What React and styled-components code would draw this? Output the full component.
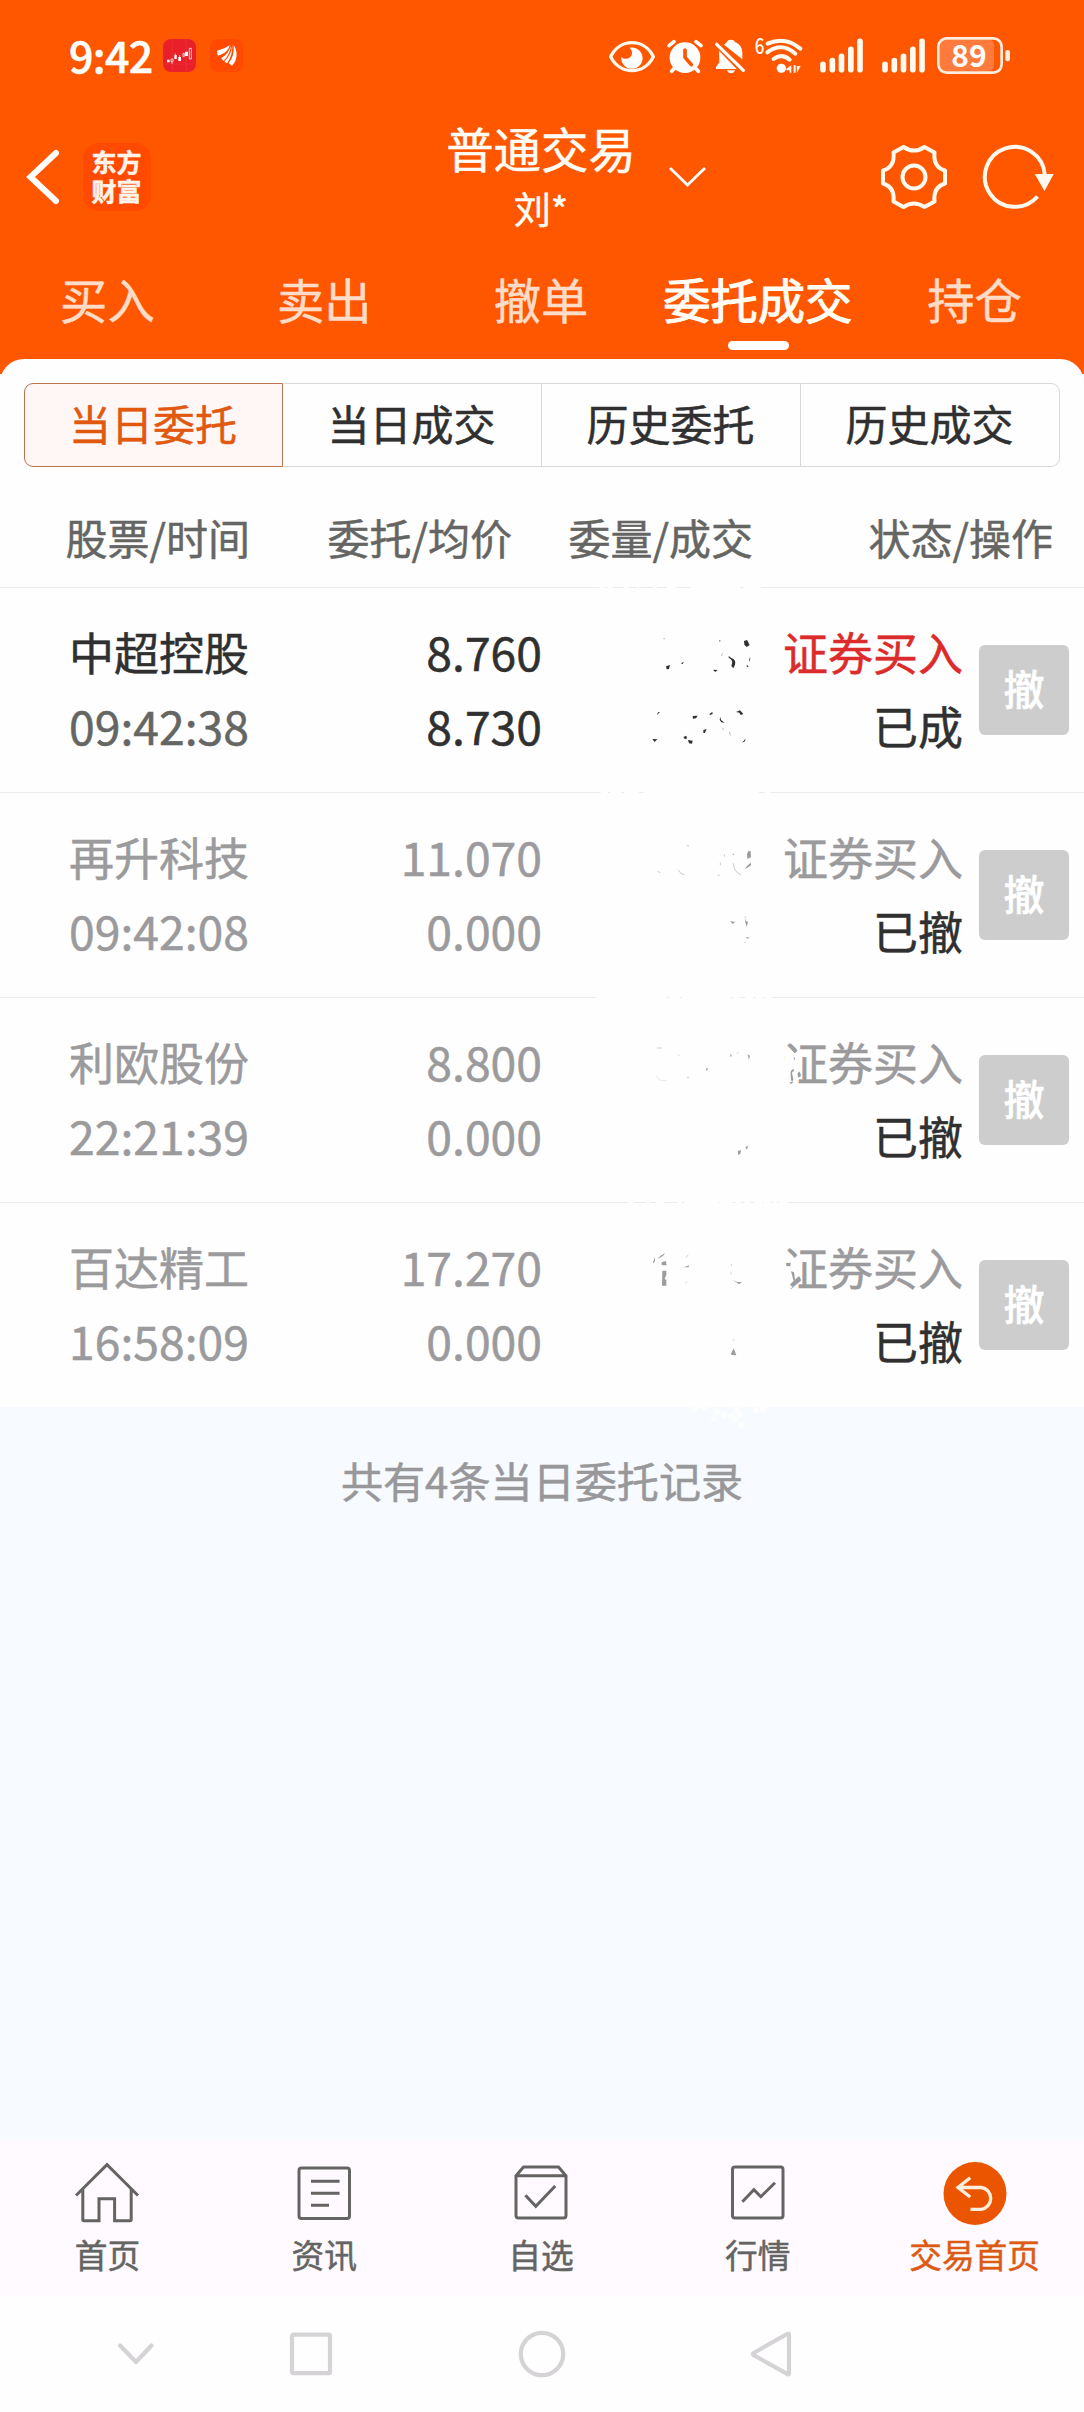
import React, { useState } from 'react';
import styled, { createGlobalStyle } from 'styled-components';

const GlobalStyle = createGlobalStyle`
  * {
    box-sizing: border-box;
  }
  body {
    margin: 0;
    background: #f7faff;
    font-family: 'Noto Sans CJK SC', 'Noto Sans', sans-serif;
    -webkit-text-stroke: 0.5px currentColor;
  }
  svg text {
    -webkit-text-stroke: 0;
  }
`;

const Page = styled.div`
  width: 1084px;
  height: 2412px;
  display: flex;
  flex-direction: column;
  background: #f7faff;
  overflow: hidden;
`;

const TopArea = styled.div`
  height: 374px;
  flex-shrink: 0;
  background: #ff5600;
  color: #fffdf6;
`;

const StatusBar = styled.div`
  height: 110px;
  padding: 0 74px 0 69px;
  display: flex;
  align-items: center;
`;

const Clock = styled.div`
  width: 94px;
  padding-bottom: 2px;
  font-size: 43px;
  font-weight: 500;
  line-height: 60px;
  letter-spacing: -0.7px;
  color: #fff;
`;

const AppBadge = styled.svg`
  width: 33px;
  height: 33px;
  margin-right: 14px;
`;

const StatusIcons = styled.div`
  display: flex;
  margin-left: auto;
`;

const StatusSvg = styled.svg`
  height: 38.67px;
  margin-left: ${(props) => props.$gap || 0}px;
  overflow: visible;
`;

const Header = styled.div`
  height: 134px;
  display: grid;
  grid-template-columns: 1fr auto 1fr;
  align-items: center;
`;

const HeaderLeft = styled.div`
  display: flex;
  align-items: center;
  padding-left: 26px;
`;

const Brand = styled.div`
  width: 68px;
  height: 68px;
  margin-left: 23px;
  padding: 4px 1px 0 0;
  border-radius: 16px;
  background: #ff4a00;
  color: #fff3ea;
  font-size: 25px;
  font-weight: 700;
  line-height: 29px;
  text-align: center;
`;

const TitleBlock = styled.div`
  padding: 2px 2px 0 0;
  text-align: center;
`;

const Title = styled.div`
  font-size: 47.4px;
  line-height: 60px;
`;

const Account = styled.div`
  font-size: 37px;
  line-height: 60px;
`;

const HeaderRight = styled.div`
  display: flex;
  align-items: center;
  padding: 0 29px 0 30px;

  svg:nth-child(2) {
    margin-left: auto;
    margin-right: 34px;
  }
`;

const Tabs = styled.div`
  display: grid;
  grid-template-columns: repeat(5, 1fr);
`;

const Tab = styled.div`
  display: flex;
  flex-direction: column;
  align-items: center;
  padding: 27px 2px 0 0;
  font-size: 47.3px;
  line-height: 56px;
  white-space: nowrap;
  cursor: pointer;
  color: ${(props) => (props.$active ? '#fffdf4' : '#ffdcc7')};
  -webkit-text-stroke-width: ${(props) => (props.$active ? '1.1px' : '0.5px')};

  &::after {
    content: '';
    width: 61px;
    height: 9px;
    margin: 14px 0 0 2px;
    border-radius: 5px;
    background: ${(props) => (props.$active ? '#fff' : 'transparent')};
  }
`;

const Panel = styled.div`
  position: relative;
  margin-top: -15px;
  flex-shrink: 0;
  border-radius: 24px 24px 0 0;
  background: #fefefe;
`;

const Segments = styled.div`
  display: grid;
  grid-template-columns: repeat(4, 1fr);
  padding: 24px 24px 23px;
`;

const Segment = styled.div`
  height: 84px;
  margin-left: ${(props) => (props.$first ? 0 : '-1px')};
  padding: 0 1px 5px 0;
  display: flex;
  align-items: center;
  justify-content: center;
  font-size: 42px;
  cursor: pointer;
  position: relative;
  z-index: ${(props) => (props.$active ? 1 : 0)};
  border: 1px solid ${(props) => (props.$active ? '#bb7450' : '#d7d8dc')};
  background: ${(props) => (props.$active ? '#fff7f6' : '#fefefe')};
  color: ${(props) => (props.$active ? '#e0590f' : '#303030')};
  border-radius: ${(props) => (props.$first ? '9px 0 0 9px' : props.$last ? '0 9px 9px 0' : 0)};
`;

const Table = styled.div`
  position: relative;
`;

const TableHead = styled.div`
  display: grid;
  grid-template-columns: 250px 262px 241px 300px;
  height: 98px;
  padding-right: 31px;
  border-bottom: 1px solid #ececec;
  color: #656664;
  font-size: 42px;
  line-height: 93px;
  text-align: right;
  white-space: nowrap;
`;

const Row = styled.div`
  display: grid;
  grid-template-columns: 249px 293px 421px 1fr;
  align-items: center;
  height: ${(props) => (props.$last ? 204 : 205)}px;
  border-bottom: ${(props) => (props.$last ? 'none' : '1px solid #ececec')};
`;

const Cell = styled.div`
  height: 204px;
  padding-top: 27px;
  text-align: right;
  font-size: 45px;
  line-height: 73.500px;
  white-space: nowrap;
`;

const Line = styled.div`
  color: ${(props) => props.$color};
`;

const Digits = styled(Line)`
  position: relative;
  top: -1px;
  font-size: 46.3px;
`;

const CancelButton = styled.button`
  width: 90px;
  height: 90px;
  margin-left: 16px;
  padding: 0 0 5px;
  border: 0;
  border-radius: 6px;
  background: #cdcdcd;
  color: #fff;
  font-family: inherit;
  font-size: 41px;
  font-weight: 500;
  line-height: 85px;
  -webkit-text-stroke: 0.5px #fff;
`;

/* white scribble drawn over the quantity column */
const Scribble = styled.svg`
  position: absolute;
  left: 590px;
  top: 80px;
  width: 220px;
  height: 860px;
  pointer-events: none;
`;

const Summary = styled.div`
  padding-top: 49px;
  color: #98989a;
  font-size: 42.1px;
  line-height: 48px;
  text-align: center;
`;

const BottomNav = styled.div`
  display: grid;
  grid-template-columns: repeat(5, 1fr);
  height: 156px;
  margin-top: auto;
  flex-shrink: 0;
  background: #fefaff;
`;

const NavItem = styled.div`
  display: flex;
  flex-direction: column;
  align-items: center;
  padding: 20px 2px 0 0;
  font-size: 32.7px;
  line-height: 52px;
  color: ${(props) => (props.$active ? '#db5a14' : '#646462')};

  svg {
    width: 66px;
    height: 68px;
    fill: none;
    stroke: currentColor;
    stroke-width: 3;
  }
`;

const SystemNav = styled.div`
  display: flex;
  align-items: center;
  height: 116px;
  flex-shrink: 0;
  padding-left: 116px;
  background: #fefefe;

  svg {
    fill: none;
    stroke: #d6d3d7;
    stroke-width: 4.2;
    stroke-linecap: round;
    stroke-linejoin: round;
  }
`;

const SystemButton = styled.svg`
  margin-left: ${(props) => props.$gap || 0}px;
`;

const orders = [
  { name: '中超控股', time: '09:42:38', price: '8.760', avg: '8.730', side: '证券买入', status: '已成', live: true },
  { name: '再升科技', time: '09:42:08', price: '11.070', avg: '0.000', side: '证券买入', status: '已撤' },
  { name: '利欧股份', time: '22:21:39', price: '8.800', avg: '0.000', side: '证券买入', status: '已撤' },
  { name: '百达精工', time: '16:58:09', price: '17.270', avg: '0.000', side: '证券买入', status: '已撤' },
];

const tabs = ['买入', '卖出', '撤单', '委托成交', '持仓'];
const segments = ['当日委托', '当日成交', '历史委托', '历史成交'];

const Signal = ({ gap }) => (
  <StatusSvg $gap={gap} width="43" viewBox="0 48 129 116" stroke="#fffaf0" strokeWidth="17" strokeLinecap="round">
    <path d="M9 133v16M37 122v27M64.500 109v40M92.500 88v61M120 64v85" />
  </StatusSvg>
);

const StatusRight = () => (
  <StatusIcons>
    <StatusSvg width="46" viewBox="57 48 138 116">
      <path d="M62 110C90 54 162 54 190 110C162 166 90 166 62 110Z" fill="none" stroke="#fffaf0" strokeWidth="10" strokeLinejoin="round" />
      <path d="M119 83A32 32 0 1 1 94 111A19 19 0 0 0 124 107Q130 95 119 83Z" fill="#fff" />
    </StatusSvg>
    <StatusSvg $gap={12} width="36" viewBox="231 48 108 116">
      <circle cx="285" cy="113" r="46" fill="#fff" />
      <path d="M237 77l15-12M333 77l-15-12M254 144l-9 10M316 144l9 10" stroke="#fff" strokeWidth="11" strokeLinecap="round" />
      <path d="M285 90v22l19 22" fill="none" stroke="#ff5600" strokeWidth="11" strokeLinecap="round" />
    </StatusSvg>
    <StatusSvg $gap={12} width="30" viewBox="375 48 90 116" fill="#fff">
      <path d="M402 74L411 66Q413 59 423 59Q432 59 435 66Q457 75 457 98V118Z" />
      <path d="M387 92L440 147H378V141L388 127Z" />
      <path d="M411 151h24q-3 9-12 9t-12-9z" />
      <path d="M380 73L460 151" stroke="#fff" strokeWidth="10" strokeLinecap="round" />
    </StatusSvg>
    <StatusSvg $gap={10} width="48" viewBox="495 48 144 116">
      <text x="494" y="101" fill="#fffaf0" fontSize="65" fontWeight="500" textLength="29" lengthAdjust="spacingAndGlyphs">6</text>
      <g fill="none" stroke="#fffaf0" strokeWidth="12" strokeLinecap="round">
        <path d="M533 71Q585 48 631 86" />
        <path d="M532 97Q575 65 616 101" />
        <path d="M551 117Q576 99 599 119" />
      </g>
      <circle cx="574" cy="145" r="14" fill="#fff" />
      <path d="M604 136v22h-5v-7h-10v-5zM611 136h6v22h-6zM620 138h12l-11 20z" fill="#fffaf0" />
    </StatusSvg>
    <Signal gap={17} />
    <Signal gap={19} />
    <StatusSvg $gap={12} width="73.300" viewBox="1041 48 220 116">
      <rect x="1050" y="60" width="162" height="93" rx="14" fill="#ff7b3d" />
      <rect x="1045" y="55" width="190" height="103" rx="25" fill="none" stroke="#ffeedd" strokeWidth="8" />
      <rect x="1246" y="90" width="14" height="34" rx="6" fill="#ffeedd" />
      <text x="1137" y="140" textAnchor="middle" fill="#fff" fontSize="93" fontWeight="700" textLength="106" lengthAdjust="spacingAndGlyphs">89</text>
    </StatusSvg>
  </StatusIcons>
);

const Redaction = () => (
  <Scribble viewBox="0 0 660 2580">
    {/* gaps in the divider lines */}
    <g stroke="#fefefe" strokeWidth="6">
      <path d="M29 52h16M52 52h16M102 52h14M140 52h8M190 52h12M229 52h30M300 52h150M460 52h54" />
      <path d="M32 667h22M60 667h34M102 667h45M160 667h347M524 667h18" />
      <path d="M21 1282h210M239 1282h30M275 1282h147M429 1282h22M466 1282h24M497 1282h20M524 1282h20" />
      <path d="M116 1897h15M168 1897h12M197 1897h25M262 1897h13M283 1897h104M391 1897h34M436 1897h16M463 1897h18M494 1897h22M520 1897h22M549 1897h12M567 1897h24" />
    </g>
    <g fill="#303030">
      <path d="M228 289l12-4-3 12-7 1zM462 213l9-3 8 15-9 6-7-7zM371 299l12 1-6 5-6-2zM416 258l8 6q15 5 11 20l-5 11-6-7 2-8q3-10-10-17zM474 252q12 12 3 24l1-8q5-7-4-16zM470 284l6 5-5 3zM273 279l9-3-5 7zM388 209l4 4-3 2z" />
      <path d="M201 434l3-7 6-1-8 8zM187 507l15 1-8 8zM308 438l15-1-5 8-9 1zM358 432l9-6 1 6-8 3zM438 426l12-5 10 11-8 3-4-7zM340 480l10-3-6 13-4-2zM280 501l9-4 2 8-6 3zM294 510l14 2-2 9-9-1zM391 440l2 10 11 8-10-1-5-8zM456 518l10-11q2 8-10 11z" />
    </g>
    <g fill="none" stroke="#9c9b9d" strokeWidth="1.500">
      <path d="M394 258q3-4 3-8M418 486l4 10M220 206h5M397 474l4 6" stroke="#777" />
      <path d="M203 904l8 4M265 899q5 14 19 16M290 826l7 2M430 880q2 27 23 34M402 852l2 8M391 878v8M382 916l7-1" />
      <path d="M463 1040l6 4M463 1117h5M202 1434h13M441 1452l4-5M422 1460v-8M291 1522h6M264 1453l4 4" />
      <path d="M200 1518q5 17 30 14" stroke="#d5d5d5" />
      <path d="M287 2063l8-8M287 2140l4-5M424 2082v5M428 2310h5M422 2107l3 6" />
    </g>
    <g fill="#9c9b9d">
      <path d="M471 851l5-9 6 2 1 18-11 4zM464 897l10-12 9-7v8l-11 7zM427 851l6 1-3 4zM421 1053l15 3-9 6zM464 1044l4 9 6 3-4 15-4-15zM467 1101l13 2-8 3z" />
      <path d="M347 1497l7-4-3 10zM472 1452l8 6-4 12-1-10zM444 1742l9-1-2 10-7 3zM466 1730l9-2-5 11zM420 1457l6-2-3 5z" />
      <path d="M189 2078l6-18v13l-4 7zM202 2067q10-11 23-18l-6 9zM215 2077l12-4 3 12q-8 2-15-1zM217 2102h12v12l-5 12 5 5v16h-13zM282 2092l15-6-1 6zM427 2129l15 7 14 1-9 6-8-6zM423 2351l8-16 8 21-14-1z" />
    </g>
    {/* damaged first character of the last two rows */}
    <path d="M584 1448h31v10l10 6v72h-43zM584 2064l24-4 8 12 18 40-30 42h-22z" fill="#fefefe" />
    <g fill="#9c9b9d">
      <path d="M602 1515q-2-17 10-17v5q-8 2-5 11l3 14-3 8-4-5zM622 1512l6-8 1 14-4 3zM611 1460l4 4-3 8z" />
      <path d="M595 1428l7-6 19 22-7 6zM588 2079l14-1-1 11-12-1zM603 2104l9 3 3 22 12-11 4 11-25 21-6-7 11-10z" />
    </g>
    <g fill="#fefefe">
      <circle cx="317" cy="2515" r="9" />
      <circle cx="343" cy="2512" r="9" />
      <circle cx="381" cy="2527" r="9" />
      <circle cx="371" cy="2546" r="9" />
      <circle cx="402" cy="2535" r="9" />
      <circle cx="424" cy="2539" r="9" />
      <circle cx="434" cy="2547" r="9" />
      <circle cx="448" cy="2533" r="9" />
      <circle cx="440" cy="2519" r="10" />
      <circle cx="452" cy="2565" r="9" />
      <circle cx="499" cy="2521" r="9" />
      <circle cx="518" cy="2517" r="9" />
    </g>
  </Scribble>
);

const App = () => {
  const [tab, setTab] = useState('委托成交');
  const [segment, setSegment] = useState('当日委托');

  return (
    <Page>
      <GlobalStyle />
      <TopArea>
        <StatusBar>
          <Clock>9:42</Clock>
          <AppBadge viewBox="0 0 99 99">
            <rect width="99" height="99" rx="24" fill="#e9202a" />
            <path d="M28 0v99M70 0v99M0 75h99" stroke="#f04a4a" strokeWidth="1" />
            <path d="M12 62h8v8h-8zM34 48h7v12h-7zM46 54h8v12h-8zM66 38h9v13h-9z" fill="#fff" />
            <path d="M24 60h6v8h-6zM27 68v6M37 44v4M50 48v6M60 43h4v10h-4zM79 28h6v32h-6z" fill="none" stroke="#ffe6e6" strokeWidth="2.500" />
          </AppBadge>
          <AppBadge viewBox="0 0 99 99">
            <rect width="99" height="99" rx="24" fill="#ff4a00" />
            <path d="M21 35Q45 29 59 19Q54 42 24 50Q20 43 21 35Z" fill="#fff" />
            <path d="M63 18Q60 48 40 66L34 57Q56 45 63 18Z" fill="#fff" />
            <path d="M67 19Q68 50 51 73L43 68Q64 48 67 19Z" fill="#fff" />
            <path d="M71 18Q85 38 77 64Q73 74 66 80L56 72Q74 52 71 18Z" fill="#fff" />
          </AppBadge>
          <StatusRight />
        </StatusBar>

        <Header>
          <HeaderLeft>
            <svg width="34" height="58" viewBox="0 0 34 58" fill="none" stroke="#fff" strokeWidth="6" strokeLinecap="round">
              <path d="M30 5L4.500 29L30 53" strokeLinejoin="miter" />
            </svg>
            <Brand>东方<br />财富</Brand>
          </HeaderLeft>
          <TitleBlock>
            <Title>普通交易</Title>
            <Account>刘*</Account>
          </TitleBlock>
          <HeaderRight>
            <svg width="38" height="22" viewBox="0 0 38 22" fill="none" stroke="#fff" strokeWidth="2.800">
              <path d="M2 2L19.500 19L37 2" />
            </svg>
            <svg width="68" height="68" viewBox="-34 -34 68 68" fill="none" stroke="#fffaf0" strokeWidth="4" strokeLinejoin="round">
              <path d="M-10.500-30Q0-23 10.500-30L20.500-24.500Q19-10 31-6.500V6.500Q19 10 20.500 24.500L10.500 30Q0 23-10.500 30L-20.500 24.500Q-19 10-31 6.500V-6.500Q-19-10-20.500-24.500Z" />
              <circle r="11.500" />
            </svg>
            <svg width="73" height="68" viewBox="-33 -34 73 68" fill="none" stroke="#fffaf0" strokeWidth="4">
              <path d="M22.500 19.500A30 30 0 1 1 29.800-2" />
              <path d="M19.700-3H38.700L29.500 14Z" fill="#fffaf0" stroke="none" />
            </svg>
          </HeaderRight>
        </Header>

        <Tabs>
          {tabs.map((label) => (
            <Tab key={label} $active={label === tab} onClick={() => setTab(label)}>
              {label}
            </Tab>
          ))}
        </Tabs>
      </TopArea>

      <Panel>
        <Segments>
          {segments.map((label, i) => (
            <Segment
              key={label}
              $first={i === 0}
              $last={i === segments.length - 1}
              $active={label === segment}
              onClick={() => setSegment(label)}
            >
              {label}
            </Segment>
          ))}
        </Segments>

        <Table>
          <TableHead>
            <div>股票/时间</div>
            <div>委托/均价</div>
            <div>委量/成交</div>
            <div>状态/操作</div>
          </TableHead>
          {orders.map((order, i) => (
            <Row key={order.name} $last={i === orders.length - 1}>
              <Cell>
                <Line $color={order.live ? '#303030' : '#9b9a9c'}>{order.name}</Line>
                <Digits $color={order.live ? '#656664' : '#9b9a9c'}>{order.time}</Digits>
              </Cell>
              <Cell>
                <Digits $color={order.live ? '#303030' : '#9b9a9c'}>{order.price}</Digits>
                <Digits $color={order.live ? '#303030' : '#9b9a9c'}>{order.avg}</Digits>
              </Cell>
              <Cell>
                <Line $color={order.live ? '#dc2b2b' : '#9b9a9c'}>{order.side}</Line>
                <Line $color="#303030">{order.status}</Line>
              </Cell>
              <CancelButton>撤</CancelButton>
            </Row>
          ))}
          <Redaction />
        </Table>
      </Panel>

      <Summary>共有4条当日委托记录</Summary>

      <BottomNav>
        <NavItem>
          <svg viewBox="0 0 66 68">
            <path d="M2 35.500L33 4.700L64 35.500M8.800 29V59.500Q8.800 60.700 10 60.700H25V38.700H40.600V60.700H56Q57.200 60.700 57.200 59.500V29" />
          </svg>
          首页
        </NavItem>
        <NavItem>
          <svg viewBox="0 0 66 68">
            <rect x="8" y="8" width="50.500" height="50.500" rx="2.500" />
            <path d="M20 21.300H48.600M20 33.300H48.600M20 45.300H38" />
          </svg>
          资讯
        </NavItem>
        <NavItem>
          <svg viewBox="0 0 66 68">
            <path d="M8 15.700L15.500 7H50.500L58 15.700V55.500Q58 58 55.500 58H10.500Q8 58 8 55.500ZM8 15.700H58M17.400 35.300L27.800 46.300L47.200 26" />
          </svg>
          自选
        </NavItem>
        <NavItem>
          <svg viewBox="0 0 66 68">
            <rect x="7.500" y="7" width="50.500" height="51" rx="2.500" />
            <path d="M17.400 41.700L28.900 29.700L35.800 36.700L50 22.700" />
          </svg>
          行情
        </NavItem>
        <NavItem $active>
          <svg viewBox="0 0 66 68">
            <circle cx="33" cy="33.500" r="31.500" fill="#ec5500" stroke="none" />
            <path d="M28.200 17.700L16 27.500L28.200 37M16 27.500H39.200A11 11 0 0 1 39.200 49.300H28.500" stroke="#ffeedd" strokeWidth="3.300" />
          </svg>
          交易首页
        </NavItem>
      </BottomNav>

      <SystemNav>
        <SystemButton width="40" height="50" viewBox="0 0 40 50">
          <path d="M4 16.500L20 33L35.500 16.500" />
        </SystemButton>
        <SystemButton $gap={132} width="46" height="50" viewBox="0 0 46 50">
          <rect x="4" y="5.700" width="38" height="38.500" rx="1.500" />
        </SystemButton>
        <SystemButton $gap={183} width="50" height="50" viewBox="0 0 50 50">
          <circle cx="25" cy="25" r="21.200" />
        </SystemButton>
        <SystemButton $gap={181} width="46" height="50" viewBox="0 0 46 50">
          <path d="M40 4.500Q41 4.500 41 5.500V44.500Q41 46 39.500 45.200L5.500 26Q4 25 5.500 24Z" />
        </SystemButton>
      </SystemNav>
    </Page>
  );
};

export default App;
